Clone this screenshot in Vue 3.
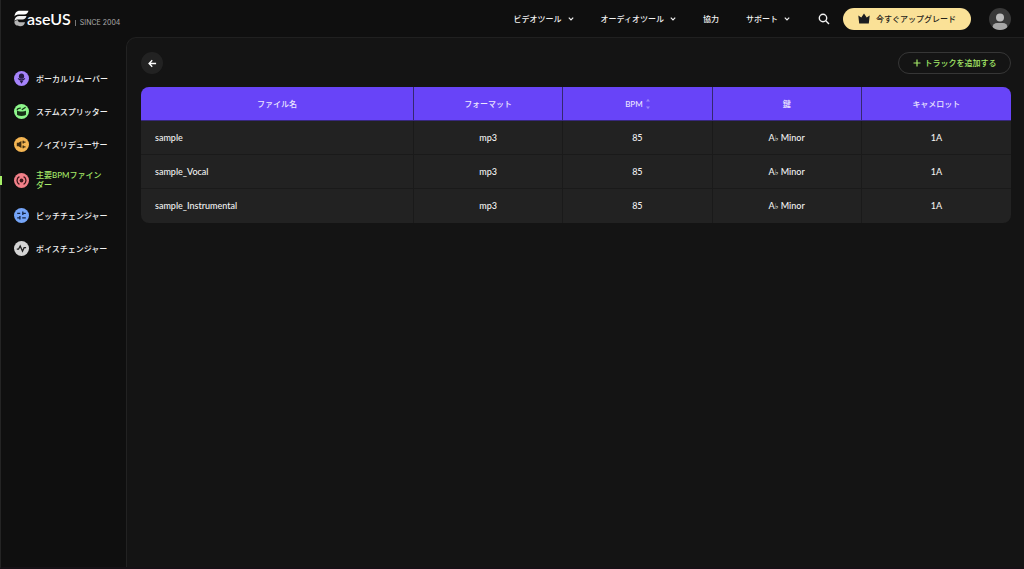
<script setup>
import { ref } from 'vue'

const menus = [
  { label: 'ビデオツール', caret: true },
  { label: 'オーディオツール', caret: true },
  { label: '協力', caret: false },
  { label: 'サポート', caret: true },
]

const tools = [
  { id: 'vocal', label: 'ボーカルリムーバー' },
  { id: 'stem', label: 'ステムスプリッター' },
  { id: 'noise', label: 'ノイズリデューサー' },
  { id: 'bpm', label: '主要BPMファインダー' },
  { id: 'pitch', label: 'ピッチチェンジャー' },
  { id: 'voice', label: 'ボイスチェンジャー' },
]
const active = ref('bpm')

const tracks = [
  { name: 'sample', format: 'mp3', bpm: 85, key: 'Minor', camelot: '1A' },
  { name: 'sample_Vocal', format: 'mp3', bpm: 85, key: 'Minor', camelot: '1A' },
  { name: 'sample_Instrumental', format: 'mp3', bpm: 85, key: 'Minor', camelot: '1A' },
]
</script>

<template>
  <div class="page">
    <header class="topbar">
      <a class="brand" href="#">
        <svg class="mark" viewBox="0 0 15 17" aria-hidden="true">
          <path d="M0.5 6.4C1 2.500 3 .8 6 .8h8.500c-.6 2.500-2 3.600-4.400 3.600H5.500C3.200 4.400 1.500 4.900.5 6.400z" fill="#fff" />
          <path d="M.4 11C.8 7.800 2.500 6 5.300 6h7.200c-.6 2.300-1.900 3.500-4 3.500H4.700c-1.900 0-3.300.3-4.300 1.500z" fill="#f1f1f1" />
          <path d="M.4 11.500c.8-.8 1.900-1.300 3.500-1.300.1 1.400 1 2.100 2.700 2.100h4.400c-.6 2.600-2 3.900-4.700 3.900C2.500 16.200.2 14.500.4 11.500z" fill="#b5b5b5" />
        </svg>
        <span class="word">aseUS</span>
        <span class="bar"></span>
        <span class="since">SINCE 2004</span>
      </a>
      <nav class="menus">
        <button v-for="m in menus" :key="m.label" type="button" class="menu">
          {{ m.label }}
          <svg v-if="m.caret" class="caret" viewBox="0 0 6 6" aria-hidden="true"><path d="M.8 1.700 3 4l2.200-2.300" /></svg>
        </button>
      </nav>
      <button type="button" class="search" aria-label="検索">
        <svg viewBox="0 0 12 12"><circle cx="5" cy="5" r="3.700" /><path d="m7.800 7.800 3.200 3.200" /></svg>
      </button>
      <button type="button" class="upgrade">
        <svg viewBox="0 0 12 11" aria-hidden="true"><path d="M.3 2.500 3.300 4.400 6 .4l2.700 4 3-1.900L10.800 10.600H1.200z" fill="#1b1c20" /></svg>
        今すぐアップグレード
      </button>
      <button type="button" class="avatar" aria-label="アカウント">
        <svg viewBox="0 0 22 22">
          <defs><clipPath id="face"><circle cx="11" cy="11" r="11" /></clipPath></defs>
          <g clip-path="url(#face)">
            <path d="M0 0h22v22H0z" fill="#393939" />
            <circle cx="11" cy="9.500" r="4" fill="#bcbcbc" />
            <rect x="3.500" y="15" width="15" height="10" rx="4.500" fill="#a7a7a7" />
          </g>
        </svg>
      </button>
    </header>

    <div class="body">
      <aside class="sidebar">
        <a v-for="t in tools" :key="t.id" href="#" class="tool" :class="{ on: active === t.id }" @click.prevent="active = t.id">
          <svg class="glyph" viewBox="0 0 15 15" aria-hidden="true">
            <g v-if="t.id === 'vocal'">
              <circle cx="7.500" cy="7.500" r="7.500" fill="#a583fb" />
              <circle cx="7.500" cy="5.200" r="2.600" fill="#251b43" />
              <path d="M4.200 7.300c1.300 2 5.300 2 6.600 0" class="ink" stroke="#251b43" />
              <path d="M5.500 9.500h4L7.500 12.800z" fill="#251b43" />
            </g>
            <g v-else-if="t.id === 'stem'">
              <circle cx="7.500" cy="7.500" r="7.500" fill="#8df68b" />
              <path d="M3 6.400c1.500 1.400 7.500 1.400 9 0v4.200c0 1.800-9 1.800-9 0z" fill="#173117" />
              <path d="M3.200 6.200c0-1.500 1.800-2 3.600-2M11.600 3.200 7.800 5.700" class="ink" stroke="#173117" />
            </g>
            <g v-else-if="t.id === 'noise'">
              <circle cx="7.500" cy="7.500" r="7.500" fill="#f4b552" />
              <path d="M2.800 5.800h1.700L7.400 4v7L4.500 9.200H2.800z" fill="#3b2a10" />
              <path d="M8.500 5.200h3M8.500 9.800h3M9.200 3.800v2.700M9.200 8.500v2.700" class="ink" stroke="#3b2a10" />
            </g>
            <g v-else-if="t.id === 'bpm'">
              <circle cx="7.500" cy="7.500" r="7.500" fill="#f28089" />
              <circle cx="7.500" cy="7.500" r="1.900" fill="#3d181c" />
              <path d="M5.400 3.600a4.400 4.400 0 0 0 0 7.800M9.600 3.600a4.400 4.400 0 0 1 0 7.800" class="ink" stroke="#3d181c" />
            </g>
            <g v-else-if="t.id === 'pitch'">
              <circle cx="7.500" cy="7.500" r="7.500" fill="#75a5f8" />
              <path d="M3.200 5.300h3M8.500 5.300h3.300M8.800 3.600v3.400M3.200 9.800h2.600M8.200 9.800h3.600M5.900 8.100v3.400" class="ink" stroke="#152544" />
            </g>
            <g v-else>
              <circle cx="7.500" cy="7.500" r="7.500" fill="#d4d4d4" />
              <path d="M2.800 8.200h1.700L6.200 5l2.300 5.200 1.600-3.500h2" class="ink" stroke="#202020" />
            </g>
          </svg>
          <span>{{ t.label }}</span>
        </a>
      </aside>

      <main class="content">
        <div class="actions">
          <button type="button" class="back" aria-label="戻る">
            <svg viewBox="0 0 10 10"><path d="M9 5H1.500M4.700 1.500 1.200 5l3.500 3.500" /></svg>
          </button>
          <button type="button" class="add">
            <svg viewBox="0 0 8 8" aria-hidden="true"><path d="M4 .5v7M.5 4h7" /></svg>
            トラックを追加する
          </button>
        </div>
        <div class="sheet">
          <table>
            <colgroup><col class="wide" /><col /><col /><col /><col /></colgroup>
            <thead>
              <tr>
                <th scope="col">ファイル名</th>
                <th scope="col">フォーマット</th>
                <th scope="col">
                  <button type="button" class="sort">
                    BPM
                    <svg viewBox="0 0 4 12" aria-hidden="true"><path d="M0 3.500 2 .8l2 2.700zM0 8.500h4L2 11.200z" fill="#9a86fb" /></svg>
                  </button>
                </th>
                <th scope="col">鍵</th>
                <th scope="col">キャメロット</th>
              </tr>
            </thead>
            <tbody>
              <tr v-for="t in tracks" :key="t.name">
                <td>{{ t.name }}</td>
                <td>{{ t.format }}</td>
                <td>{{ t.bpm }}</td>
                <td>A<span class="flat">♭</span> {{ t.key }}</td>
                <td>{{ t.camelot }}</td>
              </tr>
            </tbody>
          </table>
        </div>
      </main>
    </div>
  </div>
</template>

<style>
body {
  background: #0f0f0f;
}
</style>

<style scoped>
.page {
  box-sizing: border-box;
  min-height: 100vh;
  display: flex;
  flex-direction: column;
  border-left: 1px solid #242424;
  border-bottom: 2px solid #161116;
  background: #0f0f0f;
  color: #f2f2f2;
  font: 500 8px/10px Lato, "Noto Sans CJK JP", sans-serif;
}
button {
  padding: 0;
  border: 0;
  background: none;
  color: inherit;
  font: inherit;
  cursor: pointer;
}
a {
  color: inherit;
  text-decoration: none;
}
svg {
  display: block;
  flex: none;
}
.topbar {
  display: flex;
  align-items: center;
  height: 37px;
  padding: 0 13px;
}
.brand {
  display: flex;
  align-items: center;
  margin-right: auto;
}
.mark {
  width: 15px;
  height: 17px;
}
.word {
  margin-left: -2px;
  font: 600 16px/18px Lato, sans-serif;
  color: #fff;
}
.bar {
  width: 1px;
  height: 6px;
  margin: 9px 4px 0 4px;
  background: #777;
}
.since {
  margin-top: 9px;
  font: 400 7px/8px Inter, sans-serif;
  color: #aaa;
}
.menus {
  display: flex;
  gap: 27px;
}
.menu {
  display: flex;
  align-items: center;
  gap: 6px;
  white-space: nowrap;
}
.caret {
  width: 6px;
  height: 6px;
}
.caret path {
  fill: none;
  stroke: #eee;
  stroke-width: 1.2;
}
.search {
  margin: 0 13px 0 28px;
}
.search svg {
  width: 12px;
  height: 12px;
  fill: none;
  stroke: #f2f2f2;
  stroke-width: 1.4;
}
.upgrade {
  display: flex;
  align-items: center;
  justify-content: center;
  gap: 6px;
  width: 128px;
  height: 22px;
  border-radius: 11px;
  background: #fae197;
  color: #26231a;
}
.upgrade svg {
  width: 12px;
  height: 11px;
}
.avatar {
  margin-left: 18px;
}
.avatar svg {
  width: 22px;
  height: 22px;
}
.body {
  flex: 1;
  display: flex;
}
.sidebar {
  box-sizing: border-box;
  flex: none;
  width: 125px;
  display: flex;
  flex-direction: column;
  gap: 18px;
  padding-top: 34px;
}
.tool {
  position: relative;
  display: flex;
  align-items: center;
  gap: 7px;
  padding: 0 17px 0 13px;
}
.glyph {
  width: 15px;
  height: 15px;
}
.ink {
  fill: none;
  stroke-width: 1.3;
}
.on {
  color: #a4e868;
}
.on::before {
  content: "";
  position: absolute;
  left: -1px;
  top: 6px;
  width: 2px;
  height: 9px;
  background: #a6ef67;
}
.content {
  flex: 1;
  min-width: 0;
  padding: 14px 13px 20px 14px;
  border-top: 1px solid #202020;
  border-left: 1px solid #222;
  border-top-left-radius: 10px;
  background: #141414;
}
.actions {
  display: flex;
  align-items: center;
  justify-content: space-between;
  margin-bottom: 13px;
}
.back {
  display: grid;
  place-items: center;
  width: 22px;
  height: 22px;
  border-radius: 50%;
  background: #222;
}
.back svg {
  width: 9px;
  height: 9px;
  fill: none;
  stroke: #fff;
  stroke-width: 1.5;
}
.add {
  display: flex;
  align-items: center;
  justify-content: center;
  gap: 4px;
  width: 113px;
  height: 22px;
  border: 1px solid #363636;
  border-radius: 11px;
  color: #a4e868;
}
.add svg {
  width: 8px;
  height: 8px;
  fill: none;
  stroke: #a4e868;
  stroke-width: 1.2;
}
.sheet {
  overflow: hidden;
  border-radius: 8px;
  background: #222;
}
table {
  width: 100%;
  table-layout: fixed;
  border-collapse: separate;
  border-spacing: 0;
}
.wide {
  width: 273px;
}
th,
td {
  box-sizing: border-box;
  height: 34px;
  padding: 0 14px;
  border-right: 1px solid #1a1a1a;
  border-bottom: 1px solid #1a1a1a;
  text-align: center;
  font-weight: 500;
}
td {
  font-size: 9px;
}
th {
  border-right-color: #352871;
  border-bottom-color: #38287e;
  background: #6844f8;
  color: #ece7ff;
}
th:last-child,
td:last-child {
  border-right: 0;
}
tbody tr:last-child td {
  border-bottom: 0;
}
td:first-child {
  text-align: left;
}
.sort {
  display: inline-flex;
  align-items: center;
  gap: 3px;
}
.sort svg {
  width: 4px;
  height: 12px;
}
.flat {
  font: 700 8px/8px "DejaVu Sans", sans-serif;
}
</style>
